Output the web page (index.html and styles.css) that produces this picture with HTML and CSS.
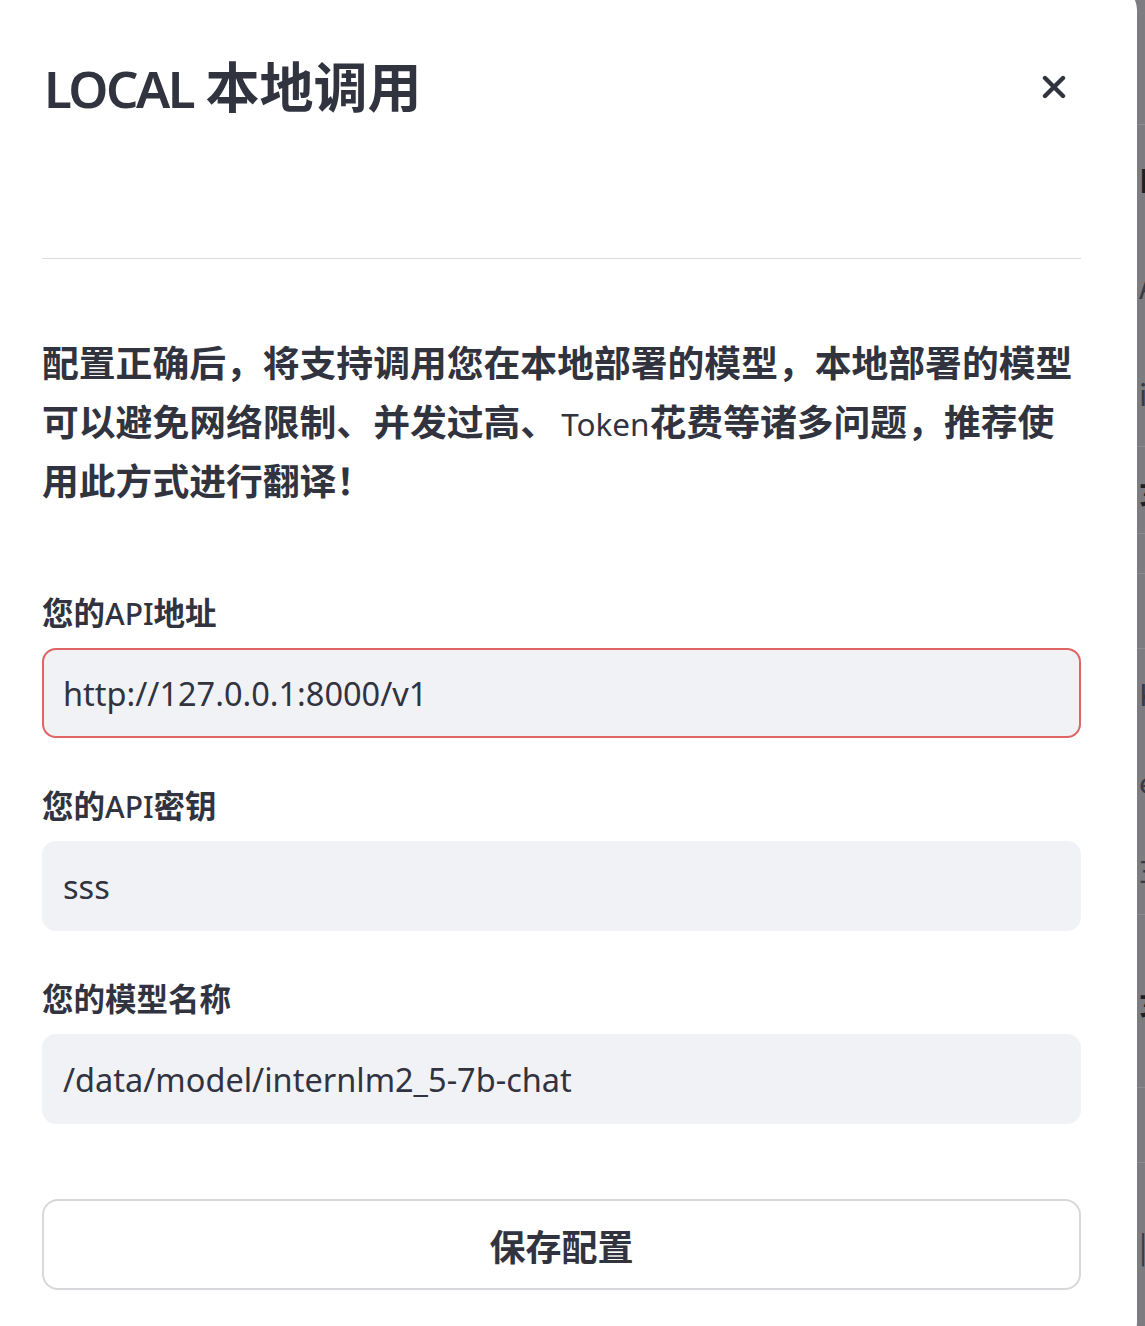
FILE: index.html
```html
<!DOCTYPE html>
<html lang="zh">
<head>
    <meta charset="UTF-8">
    <meta name="viewport" content="width=device-width, initial-scale=1.0">
    <title>LOCAL 本地调用</title>
    <link rel="stylesheet" href="styles.css">
</head>
<body>
    <div class="dialog">
        <div class="dialog-head">
            <h1 class="dialog-title"><span class="lat">LOCAL</span> 本地调用</h1>
            <button class="close-btn" title="close">
                <svg width="24" height="24" viewBox="0 0 24 24">
                    <path d="M3 3 L21 21 M21 3 L3 21" stroke="#31333f" stroke-width="4.4" stroke-linecap="round"/>
                </svg>
            </button>
        </div>
        <hr class="divider">

        <p class="intro">配置正确后，将支持调用您在本地部署的模型，本地部署的模型可以避免网络限制、并发过高、<span class="lat">Token</span>花费等诸多问题，推荐使用此方式进行翻译！</p>

        <div class="fields">
            <div class="field">
                <label class="field-label">您的<span class="lat">API</span>地址</label>
                <input class="field-input focused" type="text" value="http://127.0.0.1:8000/v1">
            </div>
            <div class="field">
                <label class="field-label">您的<span class="lat">API</span>密钥</label>
                <input class="field-input" type="text" value="sss">
            </div>
            <div class="field">
                <label class="field-label">您的模型名称</label>
                <input class="field-input" type="text" value="/data/model/internlm2_5-7b-chat">
            </div>
        </div>

        <button class="save-btn">保存配置</button>
    </div>

    <div class="backdrop">
        <div class="bg-row" style="height:125px"></div>
        <div class="bg-row" style="height:322px"><span class="bg-txt">■</span><span class="bg-txt thin">A</span><span class="bg-txt thin">il</span></div>
        <div class="bg-row" style="height:87px"><span class="bg-txt">女</span></div>
        <div class="bg-row" style="height:40px"></div>
        <div class="bg-row" style="height:75px"></div>
        <div class="bg-row" style="height:266px"><span class="bg-txt thin">K</span><span class="bg-txt thin">e</span><span class="bg-txt thin">Ξ</span></div>
        <div class="bg-row" style="height:173px"><span class="bg-txt">女</span></div>
        <div class="bg-row" style="height:75px"></div>
        <div class="bg-row last" style="height:163px"><span class="bg-txt thin">|</span></div>
    </div>
</body>
</html>
```

FILE: styles.css
```css
body {
    margin: 0;
    height: 1326px;
    overflow: hidden;
    display: flex;
    background-color: #7c7c81;
    font-family: "Noto Sans", "Noto Sans CJK SC", sans-serif;
    color: #31333f;
}

.dialog {
    flex-shrink: 0;
    width: 1167px;
    height: 1360px;
    margin-left: -30px;
    margin-top: -14px;
    padding: 68px 56px 0 72px;
    box-sizing: border-box;
    background: #ffffff;
    border-radius: 0 24px 24px 0;
}

.dialog-head {
    display: flex;
    justify-content: space-between;
    align-items: center;
    height: 65px;
}

.dialog-title {
    margin: 0;
    font-size: 54px;
    font-weight: 700;
    line-height: 65px;
    font-family: "Noto Sans CJK SC", sans-serif;
}

.dialog-title .lat {
    font-family: "Noto Sans", sans-serif;
    font-weight: 600;
    font-size: 51px;
    letter-spacing: -2.5px;
    margin-left: 2px;
}

.close-btn {
    border: none;
    background: none;
    padding: 0;
    margin-right: 15px;
    width: 24px;
    height: 24px;
    cursor: pointer;
}

.divider {
    margin: 139px 0 0;
    border: none;
    border-top: 1.5px solid #dcdcdf;
}

.intro {
    margin: 73px 0 0;
    font-family: "Noto Sans CJK SC", sans-serif;
    font-size: 36.8px;
    font-weight: 700;
    line-height: 59px;
}

.intro .lat {
    font-family: "Noto Sans", sans-serif;
    font-weight: 400;
    font-size: 31.5px;
    line-height: 1;
    margin-left: 4px;
}

.fields {
    display: flex;
    flex-direction: column;
    gap: 46px;
    margin-top: 82px;
}

.field {
    display: flex;
    flex-direction: column;
    gap: 17px;
}

.field-label {
    font-family: "Noto Sans CJK SC", sans-serif;
    font-size: 31.5px;
    font-weight: 700;
    line-height: 40px;
}

.field-label .lat {
    font-family: "Noto Sans", sans-serif;
    font-weight: 500;
    font-size: 30px;
    line-height: 1;
}

.field-input {
    height: 90px;
    box-sizing: border-box;
    border: 2px solid #f0f2f6;
    border-radius: 14px;
    background: #f0f2f6;
    padding: 0 19px;
    font-family: "Noto Sans", sans-serif;
    font-size: 32.5px;
    color: #31333f;
    outline: none;
}

.field-input.focused {
    border-color: #df6464;
}

.save-btn {
    display: block;
    width: 100%;
    height: 91px;
    margin-top: 75px;
    border: 2px solid #d8d8dc;
    border-radius: 16px;
    background: #ffffff;
    font-family: "Noto Sans CJK SC", sans-serif;
    font-size: 36px;
    font-weight: 700;
    color: #31333f;
}

.backdrop {
    flex: 1;
    display: flex;
    flex-direction: column;
    overflow: hidden;
}

.bg-row {
    box-sizing: border-box;
    border-bottom: 1.5px solid #8b8b90;
    display: flex;
    flex-direction: column;
    justify-content: space-around;
    padding-left: 2px;
    font-family: "Noto Sans CJK SC", sans-serif;
    font-size: 30px;
    font-weight: 700;
    color: #1f1f26;
    line-height: 36px;
    white-space: nowrap;
}

.bg-row.last {
    border-bottom: none;
}

.bg-txt.thin {
    font-weight: 400;
    color: #3a3a44;
}
```
